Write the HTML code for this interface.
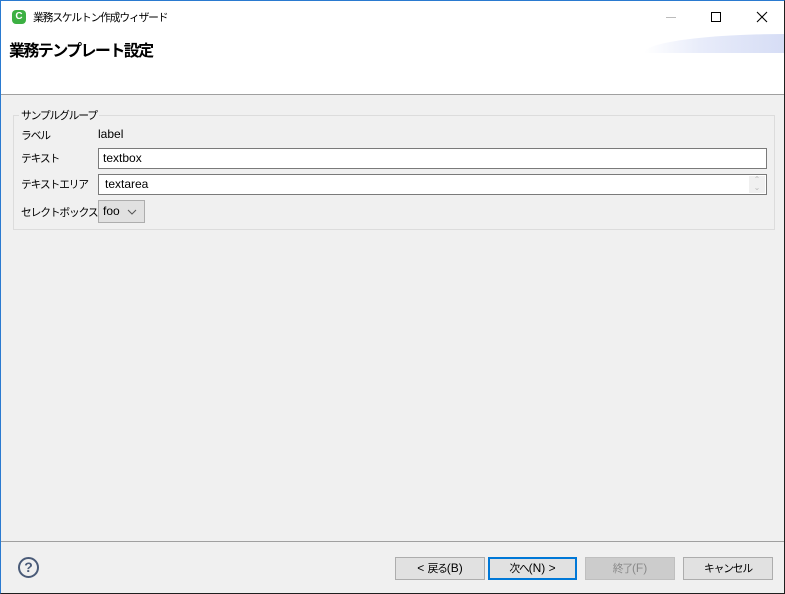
<!DOCTYPE html>
<html><head><meta charset="utf-8"><style>
*{margin:0;padding:0;box-sizing:border-box}
body{width:785px;height:594px;overflow:hidden;font-family:"Liberation Sans","Noto Sans CJK JP",sans-serif;font-size:12px;color:#000;background:#fff}
.win{position:absolute;left:0;top:0;width:785px;height:594px;border:1px solid #1f1f1f;border-top-color:#2a7ad0;border-left-color:#2a7ad0;background:#f0f0f0;overflow:hidden}
.a{position:absolute}
.j{font-size:10.8px;letter-spacing:-1.2px}
.l{font-size:12px;letter-spacing:0}
.title{left:0;top:0;width:783px;height:33px;background:#fff}
.hdr{left:0;top:33px;width:783px;height:61px;background:#fff;border-bottom:1px solid #a0a0a0}
.btn{position:absolute;top:556px;height:23px;border:1px solid #adadad;background:#e1e1e1;text-align:center;line-height:21px;font-size:12px}
.in{position:absolute;left:97px;width:669px;height:21px;background:#fff;border:1px solid #7a7a7a;line-height:19px;padding-left:4px}
</style></head><body><div class="win">
<div class="a title">
 <div class="a" style="left:11px;top:9px;width:14px;height:14px;background:#3cb043;border-radius:4px;color:#fff;font-size:10px;font-weight:bold;text-align:center;line-height:14px">C</div>
 <div class="a j" style="left:32px;top:8px;color:#000">業務スケルトン作成ウィザード</div>
 <div class="a" style="left:665px;top:16px;width:10px;height:1px;background:#bbb"></div>
 <div class="a" style="left:710px;top:11px;width:10px;height:10px;border:1px solid #000"></div>
 <svg class="a" style="left:755px;top:10px" width="12" height="12" viewBox="0 0 12 12"><path d="M1 1L11 11M11 1L1 11" stroke="#000" stroke-width="1.1"/></svg>
</div>
<div class="a hdr">
 <div class="a" style="left:8px;top:3px;font-size:16px;font-weight:bold;letter-spacing:-1.6px">業務テンプレート設定</div>
 <div class="a" style="left:643px;top:0px;width:140px;height:19px;background:linear-gradient(90deg,#fff 0%,#e8ecfa 40%,#d6ddf5 100%);border-top-left-radius:140px 19px"></div>
</div>
<div class="a" style="left:12px;top:114px;width:762px;height:115px;border:1px solid #dcdcdc"></div>
<div class="a j" style="left:18px;top:106px;background:#f0f0f0;padding:0 2px">サンプルグループ</div>
<div class="a j" style="left:20px;top:126px">ラベル</div>
<div class="a" style="left:97px;top:126px">label</div>
<div class="a j" style="left:20px;top:149px">テキスト</div>
<div class="in" style="top:147px">textbox</div>
<div class="a j" style="left:20px;top:175px">テキストエリア</div>
<div class="in" style="top:173px;padding-left:6px">textarea
 <div class="a" style="right:1px;top:1px;width:16px;height:17px;background:#f0f0f0;color:#bbb;font-size:8px;line-height:8px;text-align:center">⌃<br>⌄</div>
</div>
<div class="a j" style="left:20px;top:203px">セレクトボックス</div>
<div class="a" style="left:97px;top:199px;width:47px;height:23px;border:1px solid #adadad;background:#e1e1e1;line-height:21px;padding-left:4px">foo<svg class="a" style="left:28px;top:8px" width="10" height="6" viewBox="0 0 10 6"><path d="M1 1L5 5L9 1" stroke="#555" fill="none"/></svg></div>
<div class="a" style="left:0;top:540px;width:783px;height:1px;background:#a0a0a0"></div>
<div class="a" style="left:17px;top:556px;width:21px;height:21px;border:2px solid #4a5b78;border-radius:50%;color:#4a5b78;font-weight:bold;font-size:14px;text-align:center;line-height:17px">?</div>
<div class="btn" style="left:394px;width:90px">&lt; <span class="j">戻る</span>(B)</div>
<div class="btn" style="left:487px;width:89px;border:2px solid #0078d7;line-height:19px"><span class="j">次へ</span>(N) &gt;</div>
<div class="btn" style="left:584px;width:90px;background:#cccccc;border-color:#bfbfbf;color:#8a8a8a"><span class="j">終了</span>(F)</div>
<div class="btn" style="left:682px;width:90px"><span class="j">キャンセル</span></div>
</div></body></html>
